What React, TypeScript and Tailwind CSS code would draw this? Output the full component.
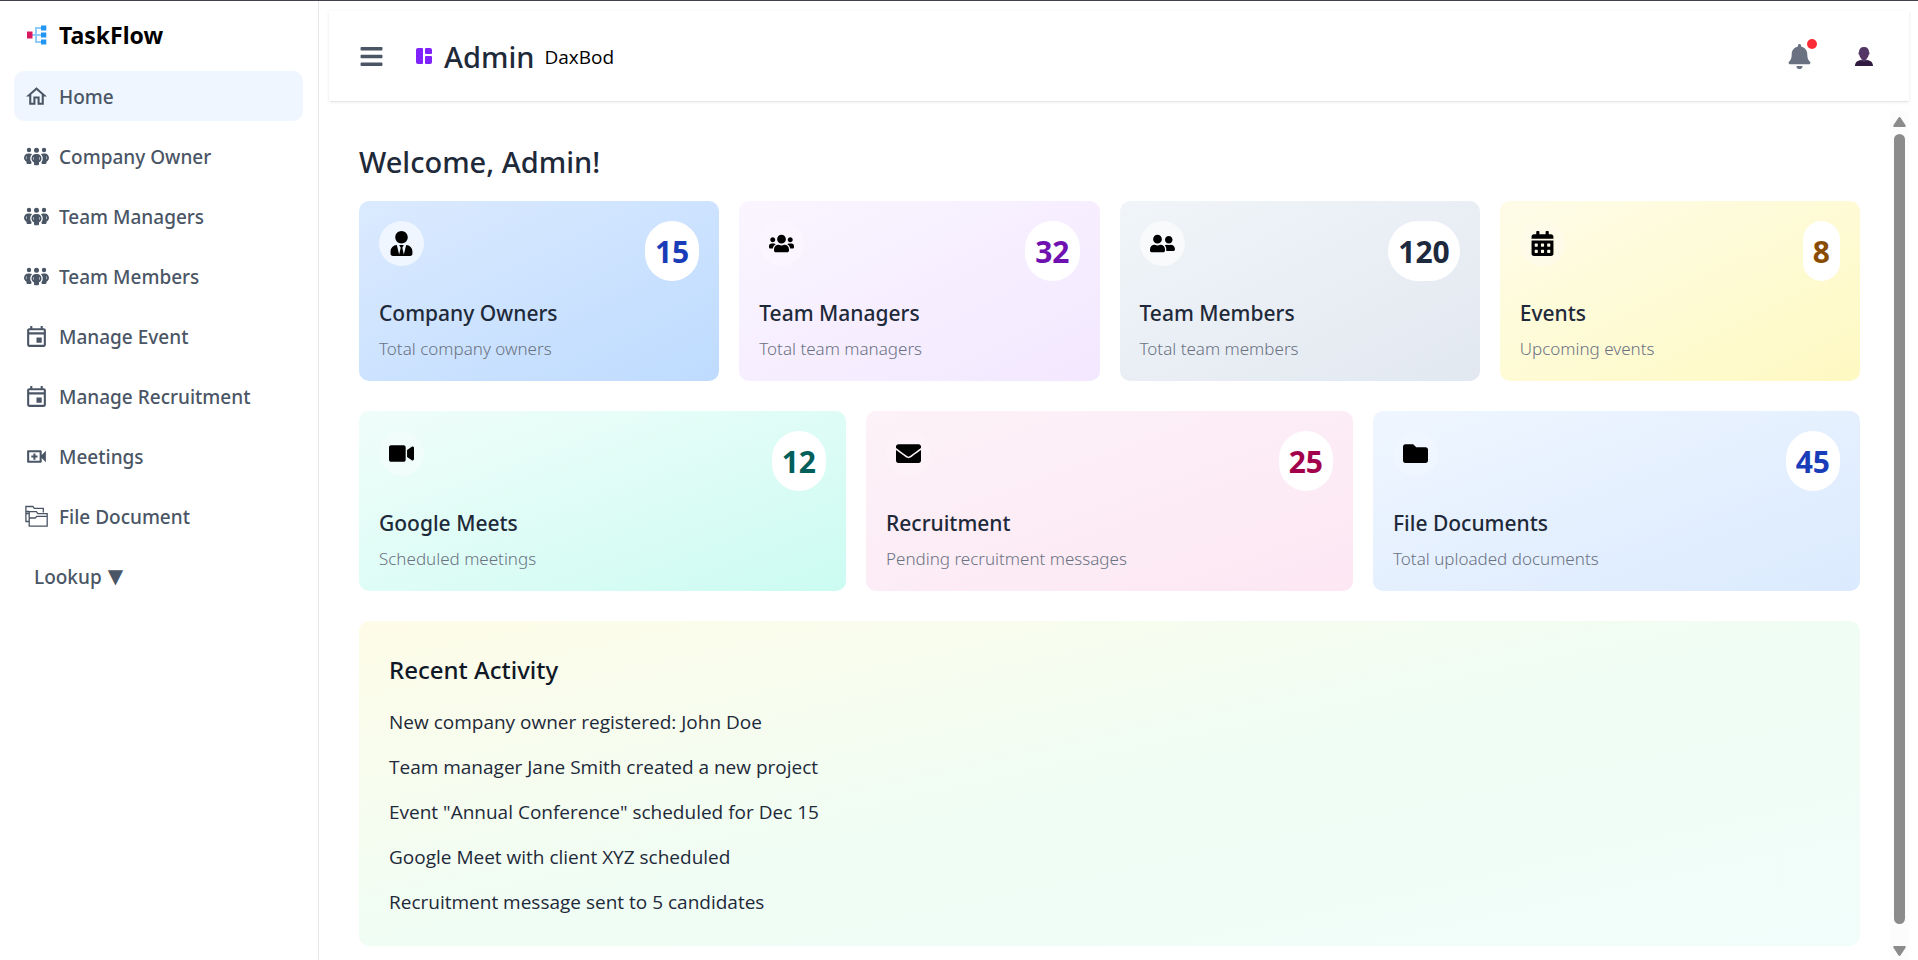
import React from "react";
import type { IconType } from "react-icons";
import { FaPeopleGroup } from "react-icons/fa6";
import { MdOutlineEvent, MdOutlineHome, MdOutlineVideoCall } from "react-icons/md";
import {
  FaBars,
  FaBell,
  FaCalendarAlt,
  FaEnvelope,
  FaFolder,
  FaUserFriends,
  FaUserTie,
  FaUsers,
  FaVideo,
} from "react-icons/fa";

function LogoIcon({ className }: { className?: string }) {
  return (
    <svg viewBox="0 0 25 25" fill="none" className={className} aria-hidden="true">
      <path d="M8 12h10M18 5h-6v14h6" stroke="#90caf9" strokeWidth="2" />
      <path d="M3 8.500h5.500v7H3z" fill="#d81b60" />
      <path d="M17 2.500h5.300v5H17zM17 9.500h5.300v5H17zM17 16.500h5.300v5H17z" fill="#2196f3" />
    </svg>
  );
}

function FoldersIcon({ className }: { className?: string }) {
  return (
    <svg viewBox="0 0 25 25" fill="none" stroke="currentColor" strokeWidth="1.3" className={className}>
      <path d="M5.200 17.500H1.900V2.500h7l1.400 1.800h9v4.200M1.900 9.500h3.300M1.900 7.500h3.300" />
      <path d="M5.200 22.200V7.600h7.200l1.400 2.100h9.400v12.500zM5.200 14h6l1.600-1.700h10.400" />
    </svg>
  );
}

function DashboardIcon({ className }: { className?: string }) {
  return (
    <svg viewBox="0 0 16 16" fill="currentColor" className={className} aria-hidden="true">
      <path d="M2 0h4a1 1 0 0 1 1 1v14a1 1 0 0 1-1 1H2a2 2 0 0 1-2-2V2a2 2 0 0 1 2-2z" />
      <path d="M10 0h4a2 2 0 0 1 2 2v3a1 1 0 0 1-1 1h-5a1 1 0 0 1-1-1V1a1 1 0 0 1 1-1z" />
      <path d="M10 8h5a1 1 0 0 1 1 1v5a2 2 0 0 1-2 2h-4a1 1 0 0 1-1-1V9a1 1 0 0 1 1-1z" />
    </svg>
  );
}

function PersonIcon() {
  return (
    <svg viewBox="0 0 18 20" className="h-5 w-[18px]" aria-hidden="true">
      <path d="M0 20c0-3.600 2.200-5.400 6-6l3 1 3-1c3.800.6 6 2.400 6 6z" fill="#321b41" />
      <path
        d="M9 1C5.600 1 4 3 4 6c-.9.2-.6 2.400.3 2.800.4 2 1.200 3.400 2.400 4.400v1.300L9 16l2.300-1.500v-1.300c1.200-1 2-2.400 2.400-4.400.9-.4 1.200-2.600.3-2.800 0-3-1.600-5-5-5z"
        fill="#533566"
      />
    </svg>
  );
}

type NavItem = { label: string; icon: IconType | typeof FoldersIcon; active?: boolean };

const navItems: NavItem[] = [
  { label: "Home", icon: MdOutlineHome, active: true },
  { label: "Company Owner", icon: FaPeopleGroup },
  { label: "Team Managers", icon: FaPeopleGroup },
  { label: "Team Members", icon: FaPeopleGroup },
  { label: "Manage Event", icon: MdOutlineEvent },
  { label: "Manage Recruitment", icon: MdOutlineEvent },
  { label: "Meetings", icon: MdOutlineVideoCall },
  { label: "File Document", icon: FoldersIcon },
];

type Stat = {
  title: string;
  note: string;
  value: number;
  icon: IconType;
  card: string;
  bubble: string;
  number: string;
};

const peopleStats: Stat[] = [
  { title: "Company Owners", note: "Total company owners", value: 15, icon: FaUserTie, card: "from-blue-100 to-blue-200", bubble: "bg-blue-50", number: "text-blue-800" },
  { title: "Team Managers", note: "Total team managers", value: 32, icon: FaUsers, card: "from-purple-50 to-purple-100", bubble: "bg-purple-50", number: "text-purple-800" },
  { title: "Team Members", note: "Total team members", value: 120, icon: FaUserFriends, card: "from-slate-100 to-slate-200", bubble: "bg-slate-50", number: "text-slate-800" },
  { title: "Events", note: "Upcoming events", value: 8, icon: FaCalendarAlt, card: "from-yellow-50 to-yellow-100", bubble: "bg-yellow-50", number: "text-yellow-800" },
];

const workStats: Stat[] = [
  { title: "Google Meets", note: "Scheduled meetings", value: 12, icon: FaVideo, card: "from-teal-50 to-teal-100", bubble: "bg-teal-50", number: "text-teal-800" },
  { title: "Recruitment", note: "Pending recruitment messages", value: 25, icon: FaEnvelope, card: "from-pink-50 to-pink-100", bubble: "bg-pink-50", number: "text-pink-800" },
  { title: "File Documents", note: "Total uploaded documents", value: 45, icon: FaFolder, card: "from-blue-50 to-blue-100", bubble: "bg-blue-50", number: "text-blue-800" },
];

const activities = [
  "New company owner registered: John Doe",
  "Team manager Jane Smith created a new project",
  'Event "Annual Conference" scheduled for Dec 15',
  "Google Meet with client XYZ scheduled",
  "Recruitment message sent to 5 candidates",
];

function StatCard({ title, note, value, icon: Icon, card, bubble, number }: Stat) {
  return (
    <article className={`rounded-[10px] bg-linear-to-br p-5 ${card}`}>
      <div className="flex items-start justify-between">
        <span className={`rounded-full p-[10px] ${bubble}`}>
          <Icon className="size-[25px] text-black" aria-hidden="true" />
        </span>
        <span className={`rounded-full bg-white px-[10px] pt-[11px] pb-[9px] text-[30px] leading-10 font-bold ${number}`}>
          {value}
        </span>
      </div>
      <h3 className="mt-[15px] text-[21px] leading-[35px] font-medium text-gray-800">{title}</h3>
      <p className="mt-[6px] text-[17px] leading-6 font-[350] text-gray-500">{note}</p>
    </article>
  );
}

export default function App() {
  return (
    <div className="flex h-screen border-t border-[#42414d] bg-white font-['Noto_Sans','Open_Sans',sans-serif] text-black">
      <aside className="w-[319px] shrink-0 border-r border-gray-200 pt-[15px] pr-[15px] pl-[14px]">
        <div className="flex h-[38px] items-center gap-[10px] px-[10px]">
          <LogoIcon className="size-[25px]" />
          <span className="text-[23px] font-bold">TaskFlow</span>
        </div>
        <nav className="mt-[17px] flex flex-col gap-[10px] text-[19px] font-medium text-gray-600" aria-label="Main">
          {navItems.map(({ label, icon: Icon, active }) => (
            <a
              key={label}
              href="#"
              className={`flex h-[50px] items-center gap-[10px] rounded-[10px] px-[10px] ${active ? "bg-blue-50" : ""}`}
            >
              <Icon className="size-[25px] shrink-0" aria-hidden="true" />
              <span className="pt-[2px]">{label}</span>
            </a>
          ))}
          <button type="button" className="flex h-[50px] items-center gap-[6px] px-5">
            <span className="pt-[2px]">Lookup</span>
            <span className="font-['DejaVu_Sans',sans-serif] text-[20px]">▼</span>
          </button>
        </nav>
      </aside>

      <div className="flex min-w-0 grow flex-col pt-[10px] pr-[9px] pl-[10px]">
        <header className="flex h-[90px] shrink-0 items-center justify-between bg-white px-[30px] shadow-sm">
          <div className="flex items-center">
            <button type="button" aria-label="Toggle menu" className="text-gray-600">
              <FaBars className="size-[25px]" />
            </button>
            <DashboardIcon className="ml-8 size-4 text-violet-600" />
            <h1 className="ml-3 pt-[2px] text-[29px] font-medium text-gray-800">Admin</h1>
            <span className="ml-[10px] pt-[2px] font-['Open_Sans','Noto_Sans',sans-serif] text-[19px]">DaxBod</span>
          </div>
          <div className="flex items-center gap-[37px]">
            <button type="button" aria-label="Notifications" className="relative text-gray-500">
              <FaBell className="size-[25px]" />
              <span className="absolute -top-[5px] -right-[5px] size-[10px] rounded-full bg-[#fb2c36]" />
            </button>
            <button type="button" aria-label="Account" className="px-[6px]">
              <PersonIcon />
            </button>
          </div>
        </header>

        <div className="mt-[10px] flex min-h-0 grow">
          <main className="min-w-0 grow overflow-hidden px-[30px] pt-[31px]">
            <h2 className="text-[29px] leading-10 font-medium text-gray-800">Welcome, Admin!</h2>
            <section className="mt-[19px] grid grid-cols-4 gap-5" aria-label="People and events">
              {peopleStats.map((s) => (
                <StatCard key={s.title} {...s} />
              ))}
            </section>
            <section className="mt-[30px] grid grid-cols-3 gap-5" aria-label="Work items">
              {workStats.map((s) => (
                <StatCard key={s.title} {...s} />
              ))}
            </section>
            <section className="mt-[30px] rounded-[10px] bg-linear-to-br from-yellow-50 via-green-50 to-teal-50 px-[30px] pt-[29px] pb-[31px]">
              <h3 className="text-[24px] leading-10 font-medium text-gray-900">Recent Activity</h3>
              <ul className="mt-5 flex flex-col gap-5 font-['Open_Sans','Noto_Sans',sans-serif] text-[19px] leading-[25px] text-gray-800">
                {activities.map((a) => (
                  <li key={a}>{a}</li>
                ))}
              </ul>
            </section>
          </main>
          <div className="flex w-[19px] shrink-0 flex-col items-center bg-[#fcfcfc] pt-[6px] pb-1" aria-hidden="true">
            <svg viewBox="0 0 13 10" className="h-[10px] w-[13px] fill-[#8b8b8b]">
              <path d="M6.500 0 Q7.200 0 7.600.7L12.700 8.600Q13 10 12 10H1Q0 10 .3 8.600L5.400.7Q5.800 0 6.500 0z" />
            </svg>
            <span className="mt-[7px] mb-[22px] w-[11px] grow rounded-full bg-[#8b8b8b]" />
            <svg viewBox="0 0 13 10" className="h-[10px] w-[13px] fill-[#8b8b8b]">
              <path d="M6.500 10Q7.200 10 7.600 9.300L12.700 1.400Q13 0 12 0H1Q0 0 .3 1.400L5.400 9.300Q5.800 10 6.500 10z" />
            </svg>
          </div>
        </div>
      </div>
    </div>
  );
}
